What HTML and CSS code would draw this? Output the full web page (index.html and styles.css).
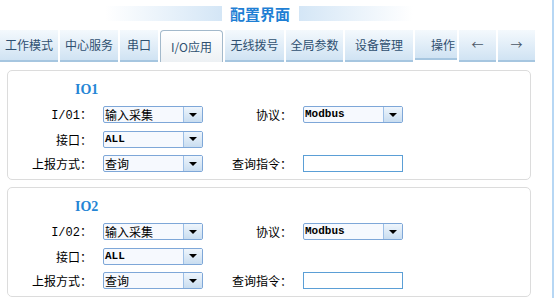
FILE: index.html
```html
<!DOCTYPE html>
<html lang="zh-CN">
<head>
    <meta charset="UTF-8">
    <title>配置界面</title>
    <link rel="stylesheet" href="styles.css">
</head>
<body>
    <div class="screen">
        <div class="main">
            <!-- Header -->
            <div class="head">
                <span class="bar bar-left"></span>
                <h1 class="title">配置界面</h1>
                <span class="bar bar-right"></span>
            </div>

            <!-- Tabs -->
            <ul class="tabs">
                <li class="tab">工作模式</li>
                <li class="tab">中心服务</li>
                <li class="tab tab-small">串口</li>
                <li class="tab tab-active">I/O应用</li>
                <li class="tab tab-mid">无线拨号</li>
                <li class="tab tab-narrow">全局参数</li>
                <li class="tab tab-wide">设备管理</li>
                <li class="tab tab-op">操作</li>
                <li class="tab tab-arrow">&larr;</li>
                <li class="tab tab-arrow">&rarr;</li>
            </ul>

            <!-- IO1 -->
            <div class="panel">
                <div class="panel-title">IO1</div>
                <div class="form">
                    <label class="form-label"><span class="en">I/01</span><span class="colon">：</span></label>
                    <div class="combo"><span class="combo-text">输入采集</span><span class="combo-btn"></span></div>
                    <label class="form-label">协议<span class="colon">：</span></label>
                    <div class="combo"><span class="combo-text en-bold">Modbus</span><span class="combo-btn"></span></div>

                    <label class="form-label">接口<span class="colon">：</span></label>
                    <div class="combo"><span class="combo-text en-bold">ALL</span><span class="combo-btn"></span></div>

                    <label class="form-label row-start">上报方式<span class="colon">：</span></label>
                    <div class="combo"><span class="combo-text">查询</span><span class="combo-btn"></span></div>
                    <label class="form-label">查询指令<span class="colon">：</span></label>
                    <input class="text-input" type="text">
                </div>
            </div>

            <!-- IO2 -->
            <div class="panel">
                <div class="panel-title">IO2</div>
                <div class="form">
                    <label class="form-label"><span class="en">I/02</span><span class="colon">：</span></label>
                    <div class="combo"><span class="combo-text">输入采集</span><span class="combo-btn"></span></div>
                    <label class="form-label">协议<span class="colon">：</span></label>
                    <div class="combo"><span class="combo-text en-bold">Modbus</span><span class="combo-btn"></span></div>

                    <label class="form-label">接口<span class="colon">：</span></label>
                    <div class="combo"><span class="combo-text en-bold">ALL</span><span class="combo-btn"></span></div>

                    <label class="form-label row-start">上报方式<span class="colon">：</span></label>
                    <div class="combo"><span class="combo-text">查询</span><span class="combo-btn"></span></div>
                    <label class="form-label">查询指令<span class="colon">：</span></label>
                    <input class="text-input" type="text">
                </div>
            </div>
        </div>
        <div class="edge"></div>
    </div>
</body>
</html>
```

FILE: styles.css
```css
body {
    margin: 0;
    font-family: "Noto Sans CJK SC", "Liberation Sans", sans-serif;
    font-size: 12px;
    color: #000;
    background-color: #fff;
}

.screen {
    display: flex;
    height: 100vh;
    overflow: hidden;
}

.main {
    width: 552px;
}

.edge {
    width: 2px;
    background-color: #b7d7f4;
}

/* header */
.head {
    display: flex;
    align-items: flex-start;
    height: 30px;
    padding-top: 6px;
    box-sizing: border-box;
}

.bar {
    height: 15px;
}

.bar-left {
    width: 117px;
    margin-left: 105px;
    background: linear-gradient(to right, #fff, #d4e6f6);
}

.bar-right {
    width: 114px;
    background: linear-gradient(to right, #d4e6f6, #fff);
}

.title {
    margin: 0 9px 0 8px;
    font-size: 15px;
    line-height: 15px;
    font-weight: bold;
    color: #1f7fd4;
}

/* tabs */
.tabs {
    display: flex;
    gap: 2px;
    height: 32px;
    margin: 0;
    padding: 0;
    list-style: none;
}

.tab {
    width: 58px;
    height: 30px;
    line-height: 30px;
    text-align: center;
    color: #2f5070;
    background: linear-gradient(#f4f9fd, #d0e3f3);
    border-bottom: 2px solid #a6c6e0;
}

.tab-small {
    width: 38px;
}

.tab-mid {
    width: 59px;
}

.tab-narrow {
    width: 57px;
}

.tab-wide {
    width: 68px;
}

.tab-op {
    width: 42px;
    text-align: right;
    padding-right: 2px;
    box-sizing: border-box;
}

.tab-arrow {
    width: 37px;
    color: #4a5766;
}

.tab-active {
    width: 63px;
    height: 32px;
    line-height: 31px;
    box-sizing: border-box;
    border: 1px solid #a3b9cb;
    border-bottom: none;
    border-radius: 4px 4px 0 0;
    background: linear-gradient(#fff, #edf1f4);
}

/* panels */
.panel {
    width: 524px;
    margin: 8px 0 0 7px;
    padding: 10px 0 7px;
    box-sizing: border-box;
    border: 1px solid #dcdcdc;
    border-radius: 5px;
}

.panel + .panel {
    margin-top: 7px;
}

.panel-title {
    padding-left: 67px;
    margin-bottom: 8px;
    font-family: "Liberation Serif", serif;
    font-size: 14px;
    line-height: 17px;
    font-weight: bold;
    color: #2585d5;
}

.form {
    display: grid;
    grid-template-columns: 84px 100px 78px 100px;
    grid-auto-rows: 17px;
    column-gap: 11px;
    row-gap: 7.5px;
    align-items: center;
}

.form-label {
    text-align: right;
    line-height: 17px;
    white-space: nowrap;
}

.colon {
    font-family: "Noto Sans CJK JP", sans-serif;
}

.row-start {
    grid-column: 1;
}

.en {
    font-family: "Liberation Mono", monospace;
    font-size: 12px;
}

.en-bold {
    font-family: "Liberation Mono", monospace;
    font-size: 11px;
    font-weight: bold;
}

.combo {
    display: flex;
    width: 100px;
    height: 17px;
    box-sizing: border-box;
    border: 1px solid #7ea7d8;
    border-radius: 2px;
    background-color: #f6f9fe;
}

.combo-text {
    flex: 1;
    padding-left: 1px;
    line-height: 15px;
    white-space: nowrap;
}

.combo-btn {
    display: flex;
    align-items: center;
    justify-content: center;
    width: 18px;
    border-left: 1px solid #9dbfe6;
    background: linear-gradient(#eef5fc, #c9ddf0);
}

.combo-btn::after {
    content: "";
    border-left: 4px solid transparent;
    border-right: 4px solid transparent;
    border-top: 4px solid #000;
}

.text-input {
    width: 100px;
    height: 17px;
    margin: 0;
    padding: 0;
    box-sizing: border-box;
    border: 1px solid #5b9fd6;
    background-color: #fff;
    font: inherit;
}
```
